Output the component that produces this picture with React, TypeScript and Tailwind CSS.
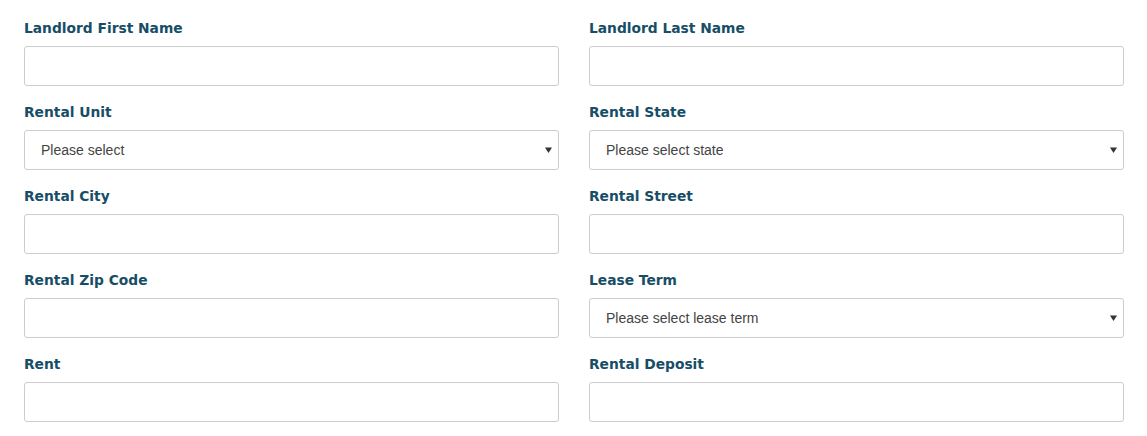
import React from "react";

type Field = {
  label: string;
  kind: "input" | "select";
  placeholder?: string;
};

const fields: Field[] = [
  { label: "Landlord First Name", kind: "input" },
  { label: "Landlord Last Name", kind: "input" },
  { label: "Rental Unit", kind: "select", placeholder: "Please select" },
  { label: "Rental State", kind: "select", placeholder: "Please select state" },
  { label: "Rental City", kind: "input" },
  { label: "Rental Street", kind: "input" },
  { label: "Rental Zip Code", kind: "input" },
  { label: "Lease Term", kind: "select", placeholder: "Please select lease term" },
  { label: "Rent", kind: "input" },
  { label: "Rental Deposit", kind: "input" },
];

const Caret = () => (
  <svg
    className="pointer-events-none absolute right-[7px] top-1/2 -translate-y-1/2"
    width="7"
    height="6"
    viewBox="0 0 7 6"
  >
    <path d="M0 0.5h7L3.5 6z" fill="#333" />
  </svg>
);

const App = () => {
  return (
    <div className="w-[1147px] h-[436px] bg-white overflow-hidden pl-6 pr-[23px] pt-[19px]">
      <div className="grid grid-cols-2 gap-x-[30px] gap-y-[17px]">
        {fields.map((f) => (
          <div key={f.label} className="flex flex-col">
            <label className="h-[19px] mb-[8px] font-['DejaVu_Sans',sans-serif] font-bold text-[13.8px] leading-[19px] text-[#174e66]">
              {f.label}
            </label>
            {f.kind === "input" ? (
              <input
                type="text"
                className="h-10 w-full rounded-[3px] border border-[#cccccc] bg-white px-4 font-['Liberation_Sans',sans-serif] text-[14px] text-[#444] outline-none"
              />
            ) : (
              <div className="relative">
                <select
                  defaultValue=""
                  className="h-10 w-full appearance-none rounded-[3px] border border-[#cccccc] bg-white pl-4 pr-6 font-['Liberation_Sans',sans-serif] text-[14px] text-[#444] outline-none"
                >
                  <option value="">{f.placeholder}</option>
                </select>
                <Caret />
              </div>
            )}
          </div>
        ))}
      </div>
    </div>
  );
};

export default App;
